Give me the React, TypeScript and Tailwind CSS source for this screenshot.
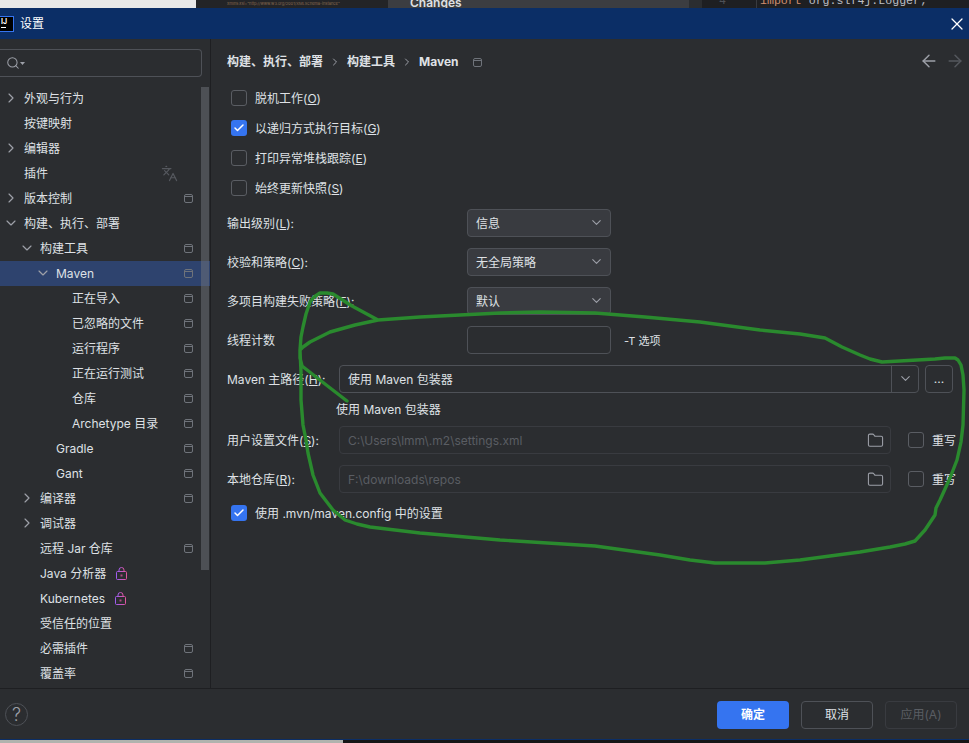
import { ChevronDown, ChevronRight, X, ArrowLeft, ArrowRight, Search, Check, Folder, Languages } from "lucide-react";

type Row = { label: string; indent: number; arrow?: "right" | "down"; win?: boolean; lock?: boolean; lang?: boolean; selected?: boolean };

const rows: Row[] = [
  { label: "外观与行为", indent: 24, arrow: "right" },
  { label: "按键映射", indent: 24 },
  { label: "编辑器", indent: 24, arrow: "right" },
  { label: "插件", indent: 24, lang: true },
  { label: "版本控制", indent: 24, arrow: "right", win: true },
  { label: "构建、执行、部署", indent: 24, arrow: "down" },
  { label: "构建工具", indent: 40, arrow: "down", win: true },
  { label: "Maven", indent: 56, arrow: "down", win: true, selected: true },
  { label: "正在导入", indent: 72, win: true },
  { label: "已忽略的文件", indent: 72, win: true },
  { label: "运行程序", indent: 72, win: true },
  { label: "正在运行测试", indent: 72, win: true },
  { label: "仓库", indent: 72, win: true },
  { label: "Archetype 目录", indent: 72, win: true },
  { label: "Gradle", indent: 56, win: true },
  { label: "Gant", indent: 56, win: true },
  { label: "编译器", indent: 40, arrow: "right", win: true },
  { label: "调试器", indent: 40, arrow: "right" },
  { label: "远程 Jar 仓库", indent: 40, win: true },
  { label: "Java 分析器", indent: 40, lock: true },
  { label: "Kubernetes", indent: 40, lock: true },
  { label: "受信任的位置", indent: 40 },
  { label: "必需插件", indent: 40, win: true },
  { label: "覆盖率", indent: 40, win: true },
];

function WinIcon() {
  return (
    <svg width="9" height="9" viewBox="0 0 9 9" fill="none" stroke="#6f737a" className="shrink-0">
      <rect x="0.5" y="0.5" width="8" height="8" rx="1.5" />
      <path d="M0.5 2.5h8" />
    </svg>
  );
}

function LockIcon({ id }: { id: string }) {
  return (
    <svg width="11" height="13" viewBox="0 0 11 13" fill="none" stroke={`url(#${id})`} className="ml-[10px] shrink-0">
      <defs>
        <linearGradient id={id} x1="0" y1="0" x2="1" y2="0">
          <stop offset="0" stopColor="#a05cf0" />
          <stop offset="1" stopColor="#e0559f" />
        </linearGradient>
      </defs>
      <rect x="0.5" y="4.5" width="10" height="8" rx="1" />
      <path d="M3 4.5V3a2.5 2.5 0 0 1 5 0v1.5" />
      <path d="M5.5 7.5v2" stroke="#b04a80" strokeWidth="2" />
    </svg>
  );
}

function Box({ checked }: { checked?: boolean }) {
  return checked ? (
    <span className="w-4 h-4 rounded-[3px] bg-[#3574f0] flex items-center justify-center shrink-0">
      <Check size={12} strokeWidth={3} className="text-white" />
    </span>
  ) : (
    <span className="w-4 h-4 rounded-[3px] border border-[#5a5d63] shrink-0" />
  );
}

function SideRow({ row }: { row: Row }) {
  return (
    <div className={`h-[25px] relative flex items-center pr-[17px] ${row.selected ? "bg-[#2e436e]" : ""}`} style={{ paddingLeft: row.indent }}>
      {row.arrow && (
        <span className="absolute top-[4px]" style={{ left: row.indent - 21 }}>
          {row.arrow === "right" ? (
            <ChevronRight size={16} strokeWidth={1.75} className="text-[#9da0a8]" />
          ) : (
            <ChevronDown size={16} strokeWidth={1.75} className="text-[#9da0a8]" />
          )}
        </span>
      )}
      <span className="text-[#dfe1e5] whitespace-nowrap">{row.label}</span>
      {row.lock && <LockIcon id={row.label === "Kubernetes" ? "lockA" : "lockB"} />}
      <span className="flex-1" />
      {row.win && <WinIcon />}
      {row.lang && <Languages size={17} strokeWidth={1.75} className="text-[#55585e] mr-[15px]" />}
    </div>
  );
}

function Dropdown({ label }: { label: string }) {
  return (
    <div className="w-[144px] h-[28px] rounded-[4px] border border-[#4e5157] bg-[#393b40] flex items-center justify-between pl-2 pr-[6px]">
      <span className="pt-[2px]">{label}</span>
      <ChevronDown size={15} strokeWidth={1.75} className="text-[#9da0a8]" />
    </div>
  );
}

function PathRow({ label, hint, value }: { label: string; hint: string; value: string }) {
  return (
    <div className="flex items-center h-[28px]">
      <span className="w-[112px] shrink-0 pt-[2px]">
        {label}(<span className="underline">{hint}</span>):
      </span>
      <div className="w-[552px] h-[28px] rounded-[4px] border border-[#393b40] flex items-center justify-between pl-2 pr-[6px]">
        <span className="text-[#5a5d63] pt-[2px]">{value}</span>
        <Folder size={17} strokeWidth={1.5} className="text-[#9da0a8]" />
      </div>
      <span className="ml-[17px] flex">
        <Box />
      </span>
      <span className="ml-[8px] whitespace-nowrap pt-[2px]">重写</span>
    </div>
  );
}

function CheckRow({ checked, label, hint }: { checked?: boolean; label: string; hint: string }) {
  return (
    <div className="flex items-center gap-[8px] h-[30px] pl-[4px]">
      <Box checked={checked} />
      <span className="pt-[2px]">
        {label}(<span className="underline">{hint}</span>)
      </span>
    </div>
  );
}

function SelectRow({ label, value, hint }: { label: string; value: string; hint: string }) {
  return (
    <div className="flex items-center h-[39px]">
      <span className="w-[240px] shrink-0 pt-[2px]">
        {label}(<span className="underline">{hint}</span>):
      </span>
      <Dropdown label={value} />
    </div>
  );
}

export default function App() {
  return (
    <div
      className="relative w-[969px] h-[743px] overflow-hidden flex flex-col bg-[#2b2d30] text-[#dfe1e5] text-[12px] leading-[18px]"
      style={{ fontFamily: 'Inter, "Noto Sans CJK SC", sans-serif' }}
    >
      {/* window behind the dialog */}
      <div className="h-2 flex shrink-0 overflow-hidden">
        <div className="w-[196px] bg-[#e8e8e8]" />
        <div className="w-[192px] bg-[#232427] pl-[31px] text-[4px] leading-[8px] text-[#8a6a50] whitespace-nowrap overflow-hidden">
          xmlns:xsi="http://www.w3.org/2001/XMLSchema-instance"
        </div>
        <div className="w-[301px] bg-[#3c3d41] text-[#dfe1e5] font-semibold pl-[22px] leading-[5px]">Changes</div>
        <div className="w-[13px] bg-[#2b2d30]" />
        <div className="flex-1 bg-[#1e1f22] flex font-['Liberation_Mono'] text-[11.6px] leading-[1px] whitespace-nowrap">
          <span className="w-[55px] h-full border-r border-[#393b40] pl-[17px] text-[#4e5157]">4</span>
          <span className="pl-[3px] text-[#bcbec4]">
            <span className="text-[#cf8e6d]">import</span> org.slf4j.Logger;
          </span>
        </div>
      </div>

      {/* title bar */}
      <div className="h-[31px] shrink-0 bg-[#0b2e66] flex items-center justify-between pr-[2px]">
        <div className="flex items-center">
          <span className="w-[14px] h-[16px] bg-black border border-l-0 border-[#3574f0] flex flex-col pl-[1px] pt-[1px]">
            <span className="text-[7px] leading-[8px] font-bold text-white">IJ</span>
            <span className="w-[5px] h-[1px] mt-[1px] bg-white" />
          </span>
          <span className="ml-[6px] text-white">设置</span>
        </div>
        <X size={20} strokeWidth={1.5} className="text-white" />
      </div>

      <div className="flex-1 flex min-h-0">
        {/* sidebar */}
        <div className="w-[211px] shrink-0 border-r border-[#1e1f22] flex flex-col">
          <div className="h-[47px] shrink-0 pt-[10px] pr-[8px]">
            <div className="h-[28px] rounded-r-[4px] border border-l-0 border-[#4e5157] flex items-center pl-[6px] text-[#9da0a8]">
              <Search size={14} strokeWidth={1.75} />
              <svg width="5" height="3" viewBox="0 0 5 3" className="mt-[1px]" fill="#9da0a8">
                <path d="M0 0h5L2.5 3z" />
              </svg>
            </div>
          </div>
          <div className="flex-1 relative overflow-hidden">
            {rows.map((r) => (
              <SideRow key={r.label} row={r} />
            ))}
            <div className="absolute right-[1px] top-[1px] w-[8px] h-[483px] bg-[#6f737a]/50" />
          </div>
        </div>

        {/* content */}
        <div className="flex-1 min-w-0 pl-[16px] pr-[4px]">
          <div className="h-[44px] flex items-center justify-between">
            <div className="flex items-center font-bold pt-[2px]">
              <span>构建、执行、部署</span>
              <ChevronRight size={12} className="mx-[6px] text-[#9da0a8]" />
              <span>构建工具</span>
              <ChevronRight size={12} className="mx-[6px] text-[#9da0a8]" />
              <span>Maven</span>
              <span className="ml-[14px]">
                <WinIcon />
              </span>
            </div>
            <div className="flex items-center gap-[6px]">
              <ArrowLeft size={20} strokeWidth={1.75} className="text-[#9da0a8]" />
              <ArrowRight size={20} strokeWidth={1.75} className="text-[#55585e]" />
            </div>
          </div>
          <CheckRow label="脱机工作" hint="O" />
          <CheckRow checked label="以递归方式执行目标" hint="G" />
          <CheckRow label="打印异常堆栈跟踪" hint="E" />
          <CheckRow label="始终更新快照" hint="S" />
          <SelectRow label="输出级别" hint="L" value="信息" />
          <SelectRow label="校验和策略" hint="C" value="无全局策略" />
          <SelectRow label="多项目构建失败策略" hint="F" value="默认" />
          <div className="flex items-center h-[39px]">
            <span className="w-[240px] shrink-0 pt-[2px]">线程计数</span>
            <div className="w-[144px] h-[28px] rounded-[4px] border border-[#4e5157]" />
            <span className="ml-[13px] text-[11px] pt-[2px]">-T 选项</span>
          </div>
          <div className="flex items-center h-[39px]">
            <span className="w-[112px] shrink-0 pt-[2px]">
              Maven 主路径(<span className="underline">H</span>):
            </span>
            <div className="w-[580px] h-[28px] rounded-[4px] border border-[#4e5157] flex items-center justify-between pl-2">
              <span className="pt-[2px]">使用 Maven 包装器</span>
              <span className="w-[27px] h-full border-l border-[#4e5157] flex items-center justify-center">
                <ChevronDown size={15} strokeWidth={1.75} className="text-[#9da0a8]" />
              </span>
            </div>
            <span className="ml-[6px] w-[28px] h-[28px] rounded-[4px] border border-[#4e5157] flex items-center justify-center">...</span>
          </div>
          <div className="h-[22px] pl-[109px] pt-[2px] flex items-center">使用 Maven 包装器</div>
          <div className="flex flex-col gap-[11px] mt-[6px]">
            <PathRow label="用户设置文件" hint="S" value="C:\Users\lmm\.m2\settings.xml" />
            <PathRow label="本地仓库" hint="R" value="F:\downloads\repos" />
          </div>
          <div className="flex items-center gap-[8px] h-[30px] pl-[4px] mt-[5px]">
            <Box checked />
            <span className="pt-[2px]">使用 .mvn/maven.config 中的设置</span>
          </div>
        </div>
      </div>

      {/* footer */}
      <div className="h-[52px] shrink-0 border-t border-[#1e1f22] flex items-center pl-[5px] pr-[12px]">
        <span className="w-[23px] h-[23px] rounded-full border border-[#4e5157] flex items-center justify-center text-[#9da0a8] text-[18px] font-light">?</span>
        <span className="flex-1" />
        <div className="flex gap-[12px]">
          <span className="w-[72px] h-[28px] rounded-[4px] bg-[#3574f0] text-white flex items-center justify-center font-semibold">确定</span>
          <span className="w-[72px] h-[28px] rounded-[4px] border border-[#4e5157] flex items-center justify-center">取消</span>
          <span className="w-[72px] h-[28px] rounded-[4px] border border-[#393b40] text-[#5a5d63] flex items-center justify-center">应用(A)</span>
        </div>
      </div>
      <div className="h-[3px] shrink-0 flex">
        <div className="w-[343px] bg-[#b0b3ae]" />
        <div className="flex-1 bg-[#161616]" />
      </div>
      <div className="absolute left-0 right-0 bottom-[3px] h-[1px] bg-[#0b2e66]" />

      {/* hand drawn annotation */}
      <svg width="969" height="743" className="absolute left-0 top-0 pointer-events-none" fill="none" stroke="#2a8a2e" strokeWidth="3.4" strokeLinejoin="round" strokeLinecap="round">
        <path d="M378 320L365 313L352 306L333 294L327 293L320 293L314 297L310 302L306 314L303 327L301 337L300 350L301 372L301 400L303 425L306 440L308 453L313 475L320 493L333 510L345 520L357 524L370 527L420 533L500 540L595 546L660 555L690 560L715 563L765 563L800 560L830 556L860 552L890 547L905 544L915 541L925 530L935 515L936 508L940 500L950 478L957 460L961 442L963 425L964 390L963 375L961 365L958 360L955 358L945 358L935 359L882 362L870 359L860 355L842 347L825 338L800 334L760 330L700 322L645 317L595 313L540 312L500 313L460 315L420 317L378 320L355 325L330 332L310 342L303 347L300 350L300 358L302 366L325 384L347 401" />
      </svg>
    </div>
  );
}
